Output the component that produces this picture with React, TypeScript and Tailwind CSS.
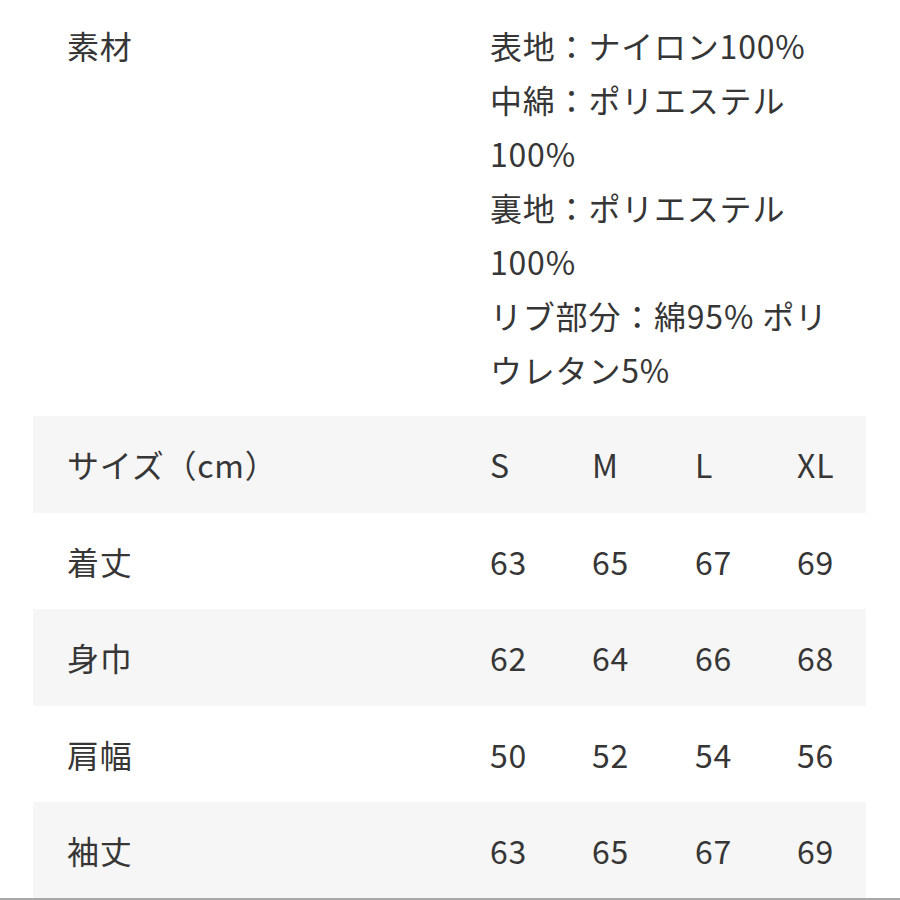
import React from "react";

const rows = [
  { label: "サイズ（cm）", vals: ["S", "M", "L", "XL"], gray: true },
  { label: "着丈", vals: ["63", "65", "67", "69"], gray: false },
  { label: "身巾", vals: ["62", "64", "66", "68"], gray: true },
  { label: "肩幅", vals: ["50", "52", "54", "56"], gray: false },
  { label: "袖丈", vals: ["63", "65", "67", "69"], gray: true },
];

export default function App() {
  return (
    <div
      className="relative w-[900px] h-[900px] bg-white text-[#363636] text-[32px] tracking-[0.8px] overflow-hidden"
      style={{ fontFamily: '"Noto Sans CJK JP", "Noto Sans", sans-serif' }}
    >
      <div className="ml-[33px] w-[833px] pt-[18px] pb-[20px] grid grid-cols-[457px_1fr] leading-[54px]">
        <div className="pl-[34px]">素材</div>
        <div className="max-w-[350px]">
          <div>表地：ナイロン100%</div>
          <div>中綿：ポリエステル100%</div>
          <div>裏地：ポリエステル100%</div>
          <div>リブ部分：綿95% ポリウレタン5%</div>
        </div>
      </div>
      <div className="ml-[33px] w-[833px]">
        {rows.map((r, i) => (
          <div
            key={i}
            className={`grid grid-cols-[457px_102px_103px_102px_1fr] items-center h-[96.5px] ${
              r.gray ? "bg-[#f6f6f6]" : "bg-white"
            }`}
          >
            <div className="pl-[34px]">{r.label}</div>
            {r.vals.map((v, j) => (
              <div key={j}>{v}</div>
            ))}
          </div>
        ))}
      </div>
      <div className="absolute left-0 right-0 bottom-0 h-[2px] bg-[#a8a8a8]" />
    </div>
  );
}
